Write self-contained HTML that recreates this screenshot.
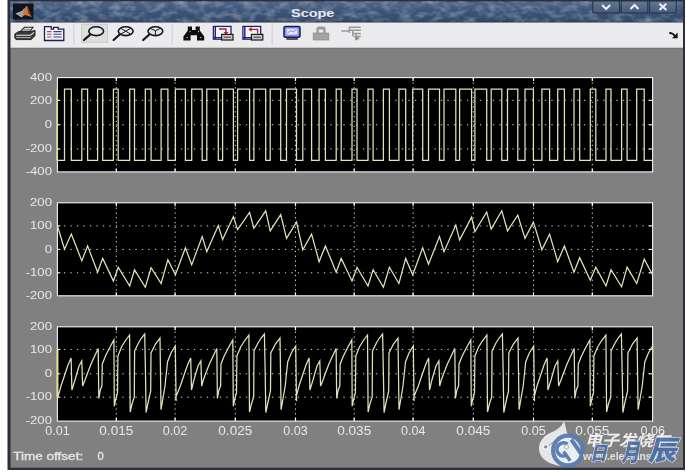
<!DOCTYPE html>
<html lang="en"><head><meta charset="utf-8"><title>Scope</title>
<style>html,body{margin:0;padding:0;background:#fff}body{width:686px;height:474px;overflow:hidden}svg{display:block}text{font-family:"Liberation Sans","Noto Sans CJK SC",sans-serif}</style></head><body>
<svg width="686" height="474" viewBox="0 0 686 474">
<defs><linearGradient id="tb" x1="0" y1="0" x2="0" y2="1"><stop offset="0" stop-color="#50668a"/><stop offset="0.45" stop-color="#3f5577"/><stop offset="1" stop-color="#33486a"/></linearGradient><linearGradient id="bt" x1="0" y1="0" x2="0" y2="1"><stop offset="0" stop-color="#64788f"/><stop offset="1" stop-color="#455a78"/></linearGradient><filter id="tx" x="0" y="0" width="100%" height="100%"><feTurbulence type="fractalNoise" baseFrequency="0.09 0.16" numOctaves="3" seed="7"/><feColorMatrix type="matrix" values="0 0 0 0 0.6  0 0 0 0 0.68  0 0 0 0 0.8  0.9 0 0 0 -0.36"/></filter><filter id="bl" x="-5%" y="-5%" width="110%" height="110%"><feGaussianBlur stdDeviation="0.35"/></filter></defs>
<rect width="686" height="474" fill="#fff"/>
<rect x="7.5" y="0" width="677.5" height="470" fill="#2a2f3a"/>
<rect x="10" y="1.5" width="673" height="20" fill="url(#tb)"/>
<rect x="10" y="1.5" width="673" height="20" fill="#fff" filter="url(#tx)"/>
<rect x="10.5" y="22.5" width="672.5" height="25" fill="#ebebee"/>
<rect x="10.5" y="47" width="672.5" height="1.2" fill="#c8c8c8"/>
<rect x="10.5" y="48.2" width="672.5" height="419.5" fill="#808080"/>
<rect x="13" y="3.5" width="20.5" height="16" fill="#10141c"/>
<path d="M15.5 13.5 L22 11 L27 5.5 L31.5 17 L25 15 L21.5 17.5 Z" fill="#c8783a"/><path d="M15.5 13.5 L22 11 L24.5 8 L23 14 L21.5 17.5Z" fill="#9aa4b4"/><path d="M27 5.5 L31.5 17 L28 13Z" fill="#8a3a20"/>
<text x="291" y="16.6" font-size="11.5" font-weight="bold" fill="#e6e8ee" textLength="43.4" lengthAdjust="spacingAndGlyphs">Scope</text>
<rect x="592.8" y="1" width="26.6" height="12" fill="url(#bt)" stroke="#20304a" stroke-width="1"/>
<path d="M602.0999999999999 5 L606.0999999999999 9 L610.0999999999999 5" fill="none" stroke="#eef" stroke-width="2"/>
<rect x="621.2" y="1" width="26.6" height="12" fill="url(#bt)" stroke="#20304a" stroke-width="1"/>
<path d="M630.5 9 L634.5 5 L638.5 9" fill="none" stroke="#eef" stroke-width="2"/>
<rect x="649.6" y="1" width="26.6" height="12" fill="url(#bt)" stroke="#20304a" stroke-width="1"/>
<path d="M659.4 3.8 L666.4 10 M666.4 3.8 L659.4 10" fill="none" stroke="#eef" stroke-width="2"/>
<g id="toolbar">
<path d="M73.8 24.5 V45 M172.2 24.5 V45 M272.2 24.5 V45" stroke="#d2d2d6" stroke-width="1.2" fill="none"/>
<!-- printer -->
<g>
<path d="M19.5 32.5 L24.5 27.3 H33 L29 32.5 Z" fill="#f4f4f4" stroke="#222" stroke-width="1.1"/>
<path d="M22.5 30.8 H29.6 M23.8 29.3 H30.8" stroke="#666" stroke-width="0.8"/>
<path d="M14.8 34 L18.5 31.6 H31 L35 30.2 V35.8 L31 39.6 H16 L14.8 38 Z" fill="#3a3a3a" stroke="#1c1c1c" stroke-width="0.9"/>
<path d="M16.2 35.2 H30.6 L34 32.4" stroke="#e8e8e8" stroke-width="1.1" fill="none"/>
<path d="M16.2 37.6 H30.6" stroke="#bdbdbd" stroke-width="0.9" fill="none"/>
</g>
<!-- parameters -->
<g>
<path d="M44.5 26.6 H51.2 V29.2 H53.6 V27.4 H58.2 V29.2 H63.8 V40.5 H44.5 Z" fill="#f2f2fa" stroke="#1c1c50" stroke-width="1.3"/>
<path d="M47 31.6 H51.6 M47 34.3 H51.6 M47 37 H51.6" stroke="#c04848" stroke-width="1.1"/>
<path d="M53.4 31.6 H61.6 M53.4 34.3 H61.6 M53.4 37 H61.6" stroke="#404078" stroke-width="1.1"/>
</g>
<!-- zoom (pressed) -->
<rect x="81.7" y="24.2" width="25.7" height="18.1" fill="#dedede" stroke="#c4c4c4" stroke-width="0.8"/>
<g stroke="#161616" fill="none">
<path d="M89.9 34.8 L84 40" stroke-width="2.2" stroke-linecap="round"/>
<ellipse cx="96.2" cy="31.2" rx="7.4" ry="4.4" fill="#dfe9f3" stroke-width="1.6"/>
<path d="M119.4 34.8 L113.6 40" stroke-width="2.2" stroke-linecap="round"/>
<ellipse cx="125.7" cy="31.2" rx="7.4" ry="4.4" fill="#dfe6f0" stroke-width="1.6"/>
<path d="M121 28.4 L130.4 34 M130.4 28.4 L121 34" stroke-width="1"/>
<path d="M149 34.8 L143.2 40" stroke-width="2.2" stroke-linecap="round"/>
<ellipse cx="155.4" cy="31.2" rx="7.4" ry="4.4" fill="#dfe6f0" stroke-width="1.6"/>
<path d="M150.2 28.2 L155.4 30.8 L160.6 28.2 M155.4 30.8 V35.4" stroke-width="1"/>
</g>
<!-- binoculars -->
<g fill="#0c0c0c">
<path d="M187.8 26.4 H192 V30 H195.6 V26.4 H199.8 V30.5 L204.2 36.6 V40.4 H197 V35.2 H190.6 V40.4 H183.4 V36.6 L187.8 30.5 Z"/>
</g>
<path d="M186.6 37.6 h1.2 M200 37.6 h1.2 M189.6 31.6 h1 M198 31.6 h1" stroke="#ddd" stroke-width="1"/>
<!-- save axes -->
<g>
<rect x="213.4" y="26.4" width="17.6" height="12.8" fill="#f4f4fa" stroke="#20207a" stroke-width="1.3"/>
<path d="M215.3 27 V39 M213.4 37.6 H222" stroke="#20207a" stroke-width="1.4"/>
<path d="M219 29 H226 V33" stroke="#b02020" stroke-width="1.4" fill="none"/><path d="M223.6 32 L226 35 L228.4 32 Z" fill="#b02020"/>
<rect x="221.6" y="34.4" width="11.4" height="5.6" fill="#c8c8c8" stroke="#1a1a1a" stroke-width="1.2"/>
<path d="M223.6 37.2 H231" stroke="#555" stroke-width="1.2"/>
</g>
<g>
<rect x="242.9" y="26.4" width="17.8" height="12.8" fill="#f4f4fa" stroke="#20207a" stroke-width="1.3"/>
<path d="M244.8 27 V39 M242.9 37.6 H251.5" stroke="#20207a" stroke-width="1.4"/>
<path d="M250.5 29.4 H257.6 V33.6" stroke="#b02020" stroke-width="1.4" fill="none"/><path d="M251.6 27 L248.4 29.4 L251.6 31.8 Z" fill="#b02020"/>
<rect x="251.4" y="34.4" width="11.4" height="5.6" fill="#c8c8c8" stroke="#1a1a1a" stroke-width="1.2"/>
<path d="M253.4 37.2 H260.8" stroke="#555" stroke-width="1.2"/>
</g>
<!-- floating scope -->
<g>
<rect x="284" y="26.6" width="16" height="10.6" rx="1.2" fill="#8c94d8" stroke="#1a1a6a" stroke-width="1.5"/>
<rect x="286.6" y="28.6" width="10.8" height="6" fill="#dfe6f6"/>
<path d="M287.4 33 L291 30.6 L293 32 L296.6 29.6" stroke="#7a86c8" stroke-width="0.9" fill="none"/>
<rect x="286.4" y="38" width="11.4" height="2" fill="#555"/>
</g>
<!-- lock (disabled) -->
<g fill="#9a9a9a">
<path d="M316.4 33 V29 Q316.4 26.4 319 26.4 H323 Q325.6 26.4 325.6 29 V33 H323.2 V29.6 H318.8 V33 Z"/>
<rect x="312.8" y="32.6" width="16.4" height="7.8"/>
</g>
<path d="M314 35.4 H328 M314 37.8 H328" stroke="#b4b4b4" stroke-width="0.8"/>
<!-- signal selector (disabled) -->
<g stroke="#9a9a9a" fill="none" stroke-width="1.5">
<path d="M341.2 31 H349 M348.6 27.2 H360.8 M350 30.2 H360.8 M352 33.4 H360.8 M354 36.4 H360.8 M349.4 27 V33 M352.8 30 V36.6 M356 33 V40"/>
</g>
<path d="M355.4 36 L360 38.4 L355.4 40.6 Z" fill="#8e8e8e"/>
<!-- right arrow -->
<path d="M669.2 32.8 Q673 33 675.2 36.2" stroke="#111" stroke-width="1.8" fill="none"/><path d="M677.6 32.6 V38.2 H672 Z" fill="#111"/>
</g>

<rect x="57.4" y="77.6" width="595.2" height="94.3" fill="#000"/>
<path d="M57.4 100.3 H652.6" stroke="#d8d8d8" stroke-width="1" stroke-dasharray="1.3 5.2" fill="none"/>
<path d="M57.4 100.3 h3 M652.6 100.3 h-4" stroke="#fff" stroke-width="1" fill="none"/>
<path d="M57.4 124.8 H652.6" stroke="#d8d8d8" stroke-width="1" stroke-dasharray="1.3 5.2" fill="none"/>
<path d="M57.4 124.8 h3 M652.6 124.8 h-4" stroke="#fff" stroke-width="1" fill="none"/>
<path d="M57.4 149 H652.6" stroke="#d8d8d8" stroke-width="1" stroke-dasharray="1.3 5.2" fill="none"/>
<path d="M57.4 149 h3 M652.6 149 h-4" stroke="#fff" stroke-width="1" fill="none"/>
<path d="M116.3 77.6 V171.9" stroke="#d8d8d8" stroke-width="1" stroke-dasharray="1.3 3.5" fill="none"/>
<path d="M116.3 77.6 v3.5 M116.3 171.9 v-3.5" stroke="#fff" stroke-width="1.2" fill="none"/>
<path d="M175.1 77.6 V171.9" stroke="#d8d8d8" stroke-width="1" stroke-dasharray="1.3 3.5" fill="none"/>
<path d="M175.1 77.6 v3.5 M175.1 171.9 v-3.5" stroke="#fff" stroke-width="1.2" fill="none"/>
<path d="M235.3 77.6 V171.9" stroke="#d8d8d8" stroke-width="1" stroke-dasharray="1.3 3.5" fill="none"/>
<path d="M235.3 77.6 v3.5 M235.3 171.9 v-3.5" stroke="#fff" stroke-width="1.2" fill="none"/>
<path d="M295.5 77.6 V171.9" stroke="#d8d8d8" stroke-width="1" stroke-dasharray="1.3 3.5" fill="none"/>
<path d="M295.5 77.6 v3.5 M295.5 171.9 v-3.5" stroke="#fff" stroke-width="1.2" fill="none"/>
<path d="M354.2 77.6 V171.9" stroke="#d8d8d8" stroke-width="1" stroke-dasharray="1.3 3.5" fill="none"/>
<path d="M354.2 77.6 v3.5 M354.2 171.9 v-3.5" stroke="#fff" stroke-width="1.2" fill="none"/>
<path d="M413.1 77.6 V171.9" stroke="#d8d8d8" stroke-width="1" stroke-dasharray="1.3 3.5" fill="none"/>
<path d="M413.1 77.6 v3.5 M413.1 171.9 v-3.5" stroke="#fff" stroke-width="1.2" fill="none"/>
<path d="M473.3 77.6 V171.9" stroke="#d8d8d8" stroke-width="1" stroke-dasharray="1.3 3.5" fill="none"/>
<path d="M473.3 77.6 v3.5 M473.3 171.9 v-3.5" stroke="#fff" stroke-width="1.2" fill="none"/>
<path d="M533.5 77.6 V171.9" stroke="#d8d8d8" stroke-width="1" stroke-dasharray="1.3 3.5" fill="none"/>
<path d="M533.5 77.6 v3.5 M533.5 171.9 v-3.5" stroke="#fff" stroke-width="1.2" fill="none"/>
<path d="M592.3 77.6 V171.9" stroke="#d8d8d8" stroke-width="1" stroke-dasharray="1.3 3.5" fill="none"/>
<path d="M592.3 77.6 v3.5 M592.3 171.9 v-3.5" stroke="#fff" stroke-width="1.2" fill="none"/>
<rect x="57.4" y="77.6" width="595.2" height="94.3" fill="none" stroke="#f4f4f4" stroke-width="1.1"/>
<rect x="57.4" y="202.8" width="595.2" height="93" fill="#000"/>
<path d="M57.4 225.9 H652.6" stroke="#d8d8d8" stroke-width="1" stroke-dasharray="1.3 5.2" fill="none"/>
<path d="M57.4 225.9 h3 M652.6 225.9 h-4" stroke="#fff" stroke-width="1" fill="none"/>
<path d="M57.4 249.4 H652.6" stroke="#d8d8d8" stroke-width="1" stroke-dasharray="1.3 5.2" fill="none"/>
<path d="M57.4 249.4 h3 M652.6 249.4 h-4" stroke="#fff" stroke-width="1" fill="none"/>
<path d="M57.4 272.8 H652.6" stroke="#d8d8d8" stroke-width="1" stroke-dasharray="1.3 5.2" fill="none"/>
<path d="M57.4 272.8 h3 M652.6 272.8 h-4" stroke="#fff" stroke-width="1" fill="none"/>
<path d="M116.3 202.8 V295.8" stroke="#d8d8d8" stroke-width="1" stroke-dasharray="1.3 3.5" fill="none"/>
<path d="M116.3 202.8 v3.5 M116.3 295.8 v-3.5" stroke="#fff" stroke-width="1.2" fill="none"/>
<path d="M175.1 202.8 V295.8" stroke="#d8d8d8" stroke-width="1" stroke-dasharray="1.3 3.5" fill="none"/>
<path d="M175.1 202.8 v3.5 M175.1 295.8 v-3.5" stroke="#fff" stroke-width="1.2" fill="none"/>
<path d="M235.3 202.8 V295.8" stroke="#d8d8d8" stroke-width="1" stroke-dasharray="1.3 3.5" fill="none"/>
<path d="M235.3 202.8 v3.5 M235.3 295.8 v-3.5" stroke="#fff" stroke-width="1.2" fill="none"/>
<path d="M295.5 202.8 V295.8" stroke="#d8d8d8" stroke-width="1" stroke-dasharray="1.3 3.5" fill="none"/>
<path d="M295.5 202.8 v3.5 M295.5 295.8 v-3.5" stroke="#fff" stroke-width="1.2" fill="none"/>
<path d="M354.2 202.8 V295.8" stroke="#d8d8d8" stroke-width="1" stroke-dasharray="1.3 3.5" fill="none"/>
<path d="M354.2 202.8 v3.5 M354.2 295.8 v-3.5" stroke="#fff" stroke-width="1.2" fill="none"/>
<path d="M413.1 202.8 V295.8" stroke="#d8d8d8" stroke-width="1" stroke-dasharray="1.3 3.5" fill="none"/>
<path d="M413.1 202.8 v3.5 M413.1 295.8 v-3.5" stroke="#fff" stroke-width="1.2" fill="none"/>
<path d="M473.3 202.8 V295.8" stroke="#d8d8d8" stroke-width="1" stroke-dasharray="1.3 3.5" fill="none"/>
<path d="M473.3 202.8 v3.5 M473.3 295.8 v-3.5" stroke="#fff" stroke-width="1.2" fill="none"/>
<path d="M533.5 202.8 V295.8" stroke="#d8d8d8" stroke-width="1" stroke-dasharray="1.3 3.5" fill="none"/>
<path d="M533.5 202.8 v3.5 M533.5 295.8 v-3.5" stroke="#fff" stroke-width="1.2" fill="none"/>
<path d="M592.3 202.8 V295.8" stroke="#d8d8d8" stroke-width="1" stroke-dasharray="1.3 3.5" fill="none"/>
<path d="M592.3 202.8 v3.5 M592.3 295.8 v-3.5" stroke="#fff" stroke-width="1.2" fill="none"/>
<rect x="57.4" y="202.8" width="595.2" height="93" fill="none" stroke="#f4f4f4" stroke-width="1.1"/>
<rect x="57.4" y="326.8" width="595.2" height="94.3" fill="#000"/>
<path d="M57.4 349.4 H652.6" stroke="#d8d8d8" stroke-width="1" stroke-dasharray="1.3 5.2" fill="none"/>
<path d="M57.4 349.4 h3 M652.6 349.4 h-4" stroke="#fff" stroke-width="1" fill="none"/>
<path d="M57.4 373.8 H652.6" stroke="#d8d8d8" stroke-width="1" stroke-dasharray="1.3 5.2" fill="none"/>
<path d="M57.4 373.8 h3 M652.6 373.8 h-4" stroke="#fff" stroke-width="1" fill="none"/>
<path d="M57.4 397.2 H652.6" stroke="#d8d8d8" stroke-width="1" stroke-dasharray="1.3 5.2" fill="none"/>
<path d="M57.4 397.2 h3 M652.6 397.2 h-4" stroke="#fff" stroke-width="1" fill="none"/>
<path d="M116.3 326.8 V421.1" stroke="#d8d8d8" stroke-width="1" stroke-dasharray="1.3 3.5" fill="none"/>
<path d="M116.3 326.8 v3.5 M116.3 421.1 v-3.5" stroke="#fff" stroke-width="1.2" fill="none"/>
<path d="M175.1 326.8 V421.1" stroke="#d8d8d8" stroke-width="1" stroke-dasharray="1.3 3.5" fill="none"/>
<path d="M175.1 326.8 v3.5 M175.1 421.1 v-3.5" stroke="#fff" stroke-width="1.2" fill="none"/>
<path d="M235.3 326.8 V421.1" stroke="#d8d8d8" stroke-width="1" stroke-dasharray="1.3 3.5" fill="none"/>
<path d="M235.3 326.8 v3.5 M235.3 421.1 v-3.5" stroke="#fff" stroke-width="1.2" fill="none"/>
<path d="M295.5 326.8 V421.1" stroke="#d8d8d8" stroke-width="1" stroke-dasharray="1.3 3.5" fill="none"/>
<path d="M295.5 326.8 v3.5 M295.5 421.1 v-3.5" stroke="#fff" stroke-width="1.2" fill="none"/>
<path d="M354.2 326.8 V421.1" stroke="#d8d8d8" stroke-width="1" stroke-dasharray="1.3 3.5" fill="none"/>
<path d="M354.2 326.8 v3.5 M354.2 421.1 v-3.5" stroke="#fff" stroke-width="1.2" fill="none"/>
<path d="M413.1 326.8 V421.1" stroke="#d8d8d8" stroke-width="1" stroke-dasharray="1.3 3.5" fill="none"/>
<path d="M413.1 326.8 v3.5 M413.1 421.1 v-3.5" stroke="#fff" stroke-width="1.2" fill="none"/>
<path d="M473.3 326.8 V421.1" stroke="#d8d8d8" stroke-width="1" stroke-dasharray="1.3 3.5" fill="none"/>
<path d="M473.3 326.8 v3.5 M473.3 421.1 v-3.5" stroke="#fff" stroke-width="1.2" fill="none"/>
<path d="M533.5 326.8 V421.1" stroke="#d8d8d8" stroke-width="1" stroke-dasharray="1.3 3.5" fill="none"/>
<path d="M533.5 326.8 v3.5 M533.5 421.1 v-3.5" stroke="#fff" stroke-width="1.2" fill="none"/>
<path d="M592.3 326.8 V421.1" stroke="#d8d8d8" stroke-width="1" stroke-dasharray="1.3 3.5" fill="none"/>
<path d="M592.3 326.8 v3.5 M592.3 421.1 v-3.5" stroke="#fff" stroke-width="1.2" fill="none"/>
<rect x="57.4" y="326.8" width="595.2" height="94.3" fill="none" stroke="#f4f4f4" stroke-width="1.1"/>
<path d="M56.9 89 V160.3 M56.9 349.4 V397.2" stroke="#c6c65e" stroke-width="1.8" fill="none" opacity="0.9"/>
<path d="M57.4 89 L57.4 160.3 L64.5 160.3 L64.5 89 L71.3 89 L71.3 160.3 L81.8 160.3 L81.8 89 L87.6 89 L87.6 160.3 L97.6 160.3 L97.6 89 L102.7 89 L102.7 160.3 L113.4 160.3 L113.4 89 L118.2 89 L118.2 160.3 L129.7 160.3 L129.7 89 L134.5 89 L134.5 160.3 L145.3 160.3 L145.3 89 L151.1 89 L151.1 160.3 L161.1 160.3 L161.1 89 L167.9 89 L167.9 160.3 L175.4 160.3 L175.4 89 L185.4 89 L185.4 160.3 L191.7 160.3 L191.7 89 L202.2 89 L202.2 160.3 L206.8 160.3 L206.8 89 L218.3 89 L218.3 160.3 L222.6 160.3 L222.6 89 L233.4 89 L233.4 160.3 L237.6 160.3 L237.6 89 L249.6 89 L249.6 160.3 L253.9 160.3 L253.9 89 L265.7 89 L265.7 160.3 L270.2 160.3 L270.2 89 L280.7 89 L280.7 160.3 L286.5 160.3 L286.5 89 L296.5 89 L296.5 160.3 L302.8 160.3 L302.8 89 L311.6 89 L311.6 160.3 L319.1 160.3 L319.1 89 L325.4 89 L325.4 160.3 L336.2 160.3 L336.2 89 L341.2 89 L341.2 160.3 L352 160.3 L352 89 L357 89 L357 160.3 L368 160.3 L368 89 L373.1 89 L373.1 160.3 L383.4 160.3 L383.4 89 L389.4 89 L389.4 160.3 L398.9 160.3 L398.9 89 L405.7 89 L405.7 160.3 L412.7 160.3 L412.7 89 L422.7 89 L422.7 160.3 L428.5 160.3 L428.5 89 L439.5 89 L439.5 160.3 L444 160.3 L444 89 L455.8 89 L455.8 160.3 L459.6 160.3 L459.6 89 L471.6 89 L471.6 160.3 L474.9 160.3 L474.9 89 L486.7 89 L486.7 160.3 L491.2 160.3 L491.2 89 L501.8 89 L501.8 160.3 L507.5 160.3 L507.5 89 L517.8 89 L517.8 160.3 L525 160.3 L525 89 L533.4 89 L533.4 160.3 L541.9 160.3 L541.9 89 L549.6 89 L549.6 160.3 L557.7 160.3 L557.7 89 L564.4 89 L564.4 160.3 L574 160.3 L574 89 L579.7 89 L579.7 160.3 L590.3 160.3 L590.3 89 L595.8 89 L595.8 160.3 L606 160.3 L606 89 L611 89 L611 160.3 L621.6 160.3 L621.6 89 L627.1 89 L627.1 160.3 L636.7 160.3 L636.7 89 L644.2 89 L644.2 160.3 L652.6 160.3" stroke="#e2e2ba" stroke-width="1.25" fill="none" stroke-linejoin="miter"/>
<path d="M57.4 225.8 L64.5 249.2 L71.3 234.1 L81.8 260.9 L87.6 245.9 L97.6 272.2 L102.7 258.4 L113.4 281 L118.2 267.2 L129.7 286 L134.5 269.7 L145.3 287.3 L151.1 267.7 L161.1 283.5 L167.9 259.7 L175.4 274.7 L185.4 247.9 L191.7 264.7 L202.2 236.6 L206.8 251.7 L218.3 225.5 L222.6 239.6 L233.4 216.6 L237.6 229.6 L249.6 212.5 L253.9 228.3 L265.7 210.8 L270.2 230.9 L280.7 214.6 L286.5 238.4 L296.5 222.1 L302.8 249.7 L311.6 234.1 L319.1 261.7 L325.4 245.9 L336.2 272.2 L341.2 258.4 L352 281 L357 267.5 L368 286 L373.1 269.7 L383.4 287.3 L389.4 267.2 L398.9 283.5 L405.7 258.4 L412.7 274.7 L422.7 247.9 L428.5 264.2 L439.5 236.6 L444 251.7 L455.8 225.1 L459.6 240.1 L471.6 217.1 L474.9 231.6 L486.7 212 L491.2 229.1 L501.8 210.8 L507.5 230.9 L517.8 215.1 L525 238.4 L533.4 222.1 L541.9 249.7 L549.6 234.1 L557.7 261.7 L564.4 245.9 L574 272.2 L579.7 257.7 L590.3 280.2 L595.8 267.2 L606 286 L611 269.7 L621.6 286.8 L627.1 267.2 L636.7 283.5 L644.2 259.2 L652.6 274.7" stroke="#e2e2ba" stroke-width="1.25" fill="none" stroke-linejoin="miter" />
<path d="M57.8 349.5 L57.8 397.3 L61 386 L65 374 L68 365 L71.1 358 L71.9 390 L75 380 L79 366 L81.8 361 L82.6 386 L85 380 L87.2 374 L91 364 L98.2 348.4 L98.8 398.5 L100.3 390 L101.9 386 L102.3 364 L105.5 356 L109.5 348 L113.9 340 L114.3 406.2 L116 398 L117.5 393 L117.9 356 L121.5 347 L125.5 340.5 L129.6 335 L130.2 412 L132 404 L134.3 397 L134.6 351 L138.5 343 L141.5 338 L144.7 334 L145.5 374 L146.1 412.6 L148 403 L150.7 391 L151 353 L155.5 344 L160 338 L161 409.7 L163 398 L165 386 L167.5 362 L171 353 L175.3 346 L176.1 401 L175.7 397.3 L180.3 386 L184.4 374 L187.5 365 L190.7 358 L191.5 390 L193.9 380 L198 366 L200.9 361 L201.7 386 L203.3 380 L205.5 374 L209.4 364 L216.8 348.4 L217.4 398.5 L218.9 390 L220.6 386 L221 364 L224.2 356 L228.3 348 L232.8 340 L233.3 406.2 L235 398 L236.5 393 L236.9 356 L240.6 347 L244.7 340.5 L248.9 335 L249.5 412 L251.4 404 L253.7 397 L254 351 L258 343 L261.1 338 L264.4 334 L265.2 374 L265.8 412.6 L267.8 403 L270.5 391 L270.8 353 L275.4 344 L280 338 L281.1 409.7 L283.1 398 L285.2 386 L287.7 362 L291.3 353 L295.7 346 L296.5 401 L296.1 397.3 L299 386 L303 374 L306 365 L309.1 358 L309.9 390 L313 380 L317 366 L319.8 361 L320.6 386 L323 380 L325.1 374 L328.9 364 L336.1 348.4 L336.7 398.5 L338.2 390 L339.8 386 L340.2 364 L343.4 356 L347.4 348 L351.8 340 L352.2 406.2 L353.9 398 L355.4 393 L355.8 356 L359.4 347 L363.4 340.5 L367.5 335 L368.1 412 L369.9 404 L372.2 397 L372.5 351 L376.4 343 L379.4 338 L382.6 334 L383.4 374 L384.1 412.6 L386 403 L388.7 391 L389 353 L393.5 344 L398 338 L399 409.7 L401 398 L403 386 L405.5 362 L409 353 L413.3 346 L414.1 401 L413.7 397.3 L418.3 386 L422.4 374 L425.5 365 L428.7 358 L429.5 390 L431.9 380 L436 366 L438.9 361 L439.7 386 L441.3 380 L443.5 374 L447.4 364 L454.8 348.4 L455.4 398.5 L456.9 390 L458.6 386 L459 364 L462.2 356 L466.3 348 L470.8 340 L471.3 406.2 L473 398 L474.5 393 L474.9 356 L478.6 347 L482.7 340.5 L486.9 335 L487.5 412 L489.4 404 L491.7 397 L492 351 L496 343 L499.1 338 L502.4 334 L503.2 374 L503.8 412.6 L505.8 403 L508.5 391 L508.8 353 L513.4 344 L518 338 L519.1 409.7 L521.1 398 L523.2 386 L525.7 362 L529.3 353 L533.7 346 L534.5 401 L534.1 397.3 L537 386 L541 374 L544 365 L547.1 358 L547.9 390 L551 380 L555 366 L557.8 361 L558.6 386 L561 380 L563.2 374 L567 364 L574.2 348.4 L574.8 398.5 L576.3 390 L577.9 386 L578.3 364 L581.5 356 L585.5 348 L589.9 340 L590.3 406.2 L592 398 L593.5 393 L593.9 356 L597.6 347 L601.7 340.5 L605.9 335 L606.6 412 L608.4 404 L610.8 397 L611.1 351 L615.1 343 L618.1 338 L621.4 334 L622.2 374 L622.9 412.6 L624.8 403 L627.6 391 L627.9 353 L632.5 344 L637.1 338 L638.1 409.7 L640.2 398 L642.2 386 L644.8 362 L648.4 353 L652.6 346 L652.6 401" stroke="#e2e2ba" stroke-width="1.25" fill="none" stroke-linejoin="miter" />
<g filter="url(#bl)">
<text x="30" y="80.8" font-size="11.5" fill="#e8e8e8" textLength="22" lengthAdjust="spacingAndGlyphs">400</text>
<text x="30" y="103.5" font-size="11.5" fill="#e8e8e8" textLength="22" lengthAdjust="spacingAndGlyphs">200</text>
<text x="44.7" y="128" font-size="11.5" fill="#e8e8e8" textLength="7.3" lengthAdjust="spacingAndGlyphs">0</text>
<text x="25.7" y="152.2" font-size="11.5" fill="#e8e8e8" textLength="26.3" lengthAdjust="spacingAndGlyphs">-200</text>
<text x="25.7" y="175.1" font-size="11.5" fill="#e8e8e8" textLength="26.3" lengthAdjust="spacingAndGlyphs">-400</text>
<text x="30" y="206" font-size="11.5" fill="#e8e8e8" textLength="22" lengthAdjust="spacingAndGlyphs">200</text>
<text x="30" y="229.1" font-size="11.5" fill="#e8e8e8" textLength="22" lengthAdjust="spacingAndGlyphs">100</text>
<text x="44.7" y="252.6" font-size="11.5" fill="#e8e8e8" textLength="7.3" lengthAdjust="spacingAndGlyphs">0</text>
<text x="25.7" y="276" font-size="11.5" fill="#e8e8e8" textLength="26.3" lengthAdjust="spacingAndGlyphs">-100</text>
<text x="25.7" y="299" font-size="11.5" fill="#e8e8e8" textLength="26.3" lengthAdjust="spacingAndGlyphs">-200</text>
<text x="30" y="330" font-size="11.5" fill="#e8e8e8" textLength="22" lengthAdjust="spacingAndGlyphs">200</text>
<text x="30" y="352.6" font-size="11.5" fill="#e8e8e8" textLength="22" lengthAdjust="spacingAndGlyphs">100</text>
<text x="44.7" y="377" font-size="11.5" fill="#e8e8e8" textLength="7.3" lengthAdjust="spacingAndGlyphs">0</text>
<text x="25.7" y="400.4" font-size="11.5" fill="#e8e8e8" textLength="26.3" lengthAdjust="spacingAndGlyphs">-100</text>
<text x="25.7" y="424.3" font-size="11.5" fill="#e8e8e8" textLength="26.3" lengthAdjust="spacingAndGlyphs">-200</text>
<text x="45.2" y="435.3" font-size="12" fill="#e8e8e8" textLength="24.5" lengthAdjust="spacingAndGlyphs">0.01</text>
<text x="99.3" y="435.3" font-size="12" fill="#e8e8e8" textLength="34" lengthAdjust="spacingAndGlyphs">0.015</text>
<text x="162.8" y="435.3" font-size="12" fill="#e8e8e8" textLength="24.5" lengthAdjust="spacingAndGlyphs">0.02</text>
<text x="218.3" y="435.3" font-size="12" fill="#e8e8e8" textLength="34" lengthAdjust="spacingAndGlyphs">0.025</text>
<text x="283.2" y="435.3" font-size="12" fill="#e8e8e8" textLength="24.5" lengthAdjust="spacingAndGlyphs">0.03</text>
<text x="337.2" y="435.3" font-size="12" fill="#e8e8e8" textLength="34" lengthAdjust="spacingAndGlyphs">0.035</text>
<text x="400.9" y="435.3" font-size="12" fill="#e8e8e8" textLength="24.5" lengthAdjust="spacingAndGlyphs">0.04</text>
<text x="456.3" y="435.3" font-size="12" fill="#e8e8e8" textLength="34" lengthAdjust="spacingAndGlyphs">0.045</text>
<text x="521.2" y="435.3" font-size="12" fill="#e8e8e8" textLength="24.5" lengthAdjust="spacingAndGlyphs">0.05</text>
<text x="575.3" y="435.3" font-size="12" fill="#e8e8e8" textLength="34" lengthAdjust="spacingAndGlyphs">0.055</text>
<text x="640.4" y="435.3" font-size="12" fill="#e8e8e8" textLength="24.5" lengthAdjust="spacingAndGlyphs">0.06</text>
<text x="13.2" y="459.9" font-size="10.5" fill="#e4e4e4" stroke="#e4e4e4" stroke-width="0.35" textLength="70" lengthAdjust="spacingAndGlyphs">Time offset:</text>
<text x="97.4" y="459.9" font-size="10.5" fill="#e4e4e4" stroke="#e4e4e4" stroke-width="0.35" textLength="6.2" lengthAdjust="spacingAndGlyphs">0</text>
</g>
<g id="watermark">
<!-- elecfans flame -->
<path d="M563.7 421.3 C562 427 556 430.5 551 432.5 C544 435.5 539.5 441 539 447.5 C538.6 455 543.5 460.5 551 463.5 C560 467 571 467.5 576 462 C580.5 457 580 446 574.5 440 C571 436.3 567.5 435 566.5 431 C565.8 428 565.6 424.5 563.7 421.3 Z" fill="#f1f1f1" opacity="0.9"/>
<path d="M548 446.4 L553.8 441.6 L564.4 446.4" stroke="#8a8a8a" stroke-width="0.9" fill="none"/>
<circle cx="545.7" cy="446.9" r="2.3" fill="#8a8a8a" stroke="#f4f4f4" stroke-width="1.3"/>
<!-- blue circular logo -->
<circle cx="567.9" cy="450.5" r="14.8" fill="#eef1f5" fill-opacity="0.8" stroke="#587ab0" stroke-width="4.2" stroke-opacity="0.95"/>
<path d="M566.8 455.2 A6.6 6.6 0 1 1 567.6 444.2" fill="none" stroke="#587ab0" stroke-width="3.6" opacity="0.95"/>
<path d="M571.2 439.5 L582 455" stroke="#587ab0" stroke-width="4" opacity="0.95"/>
<path d="M563.6 451.6 L570.2 460.8" stroke="#587ab0" stroke-width="3.4" opacity="0.95"/>
<circle cx="566.5" cy="446.9" r="2.1" fill="#eef1f5" stroke="#9ab0cf" stroke-width="0.9"/>
<text x="585" y="446" font-size="15.5" font-style="italic" font-weight="bold" fill="#f4f4f4" opacity="0.95" textLength="85" lengthAdjust="spacingAndGlyphs" style="font-family:'Liberation Sans','Noto Sans CJK SC',sans-serif">电子发烧友</text>
<text x="583" y="460.2" font-size="10" font-weight="bold" fill="#ededed" opacity="0.9" textLength="93" lengthAdjust="spacingAndGlyphs">www.elecfans.com</text>
<g font-style="italic" font-weight="900" fill="#4a6ea6" stroke="#dfe6ee" stroke-width="1.4" stroke-linejoin="round" paint-order="stroke" opacity="0.9" style="font-family:'Liberation Serif','Noto Serif CJK SC','Noto Sans CJK SC',serif">
<text x="590" y="460" font-size="19" textLength="17" lengthAdjust="spacingAndGlyphs">日</text>
<text x="621.5" y="460.6" font-size="24" textLength="18" lengthAdjust="spacingAndGlyphs">月</text>
<text x="648" y="460.4" font-size="27" textLength="28" lengthAdjust="spacingAndGlyphs">辰</text>
</g>
</g>

</svg></body></html>
